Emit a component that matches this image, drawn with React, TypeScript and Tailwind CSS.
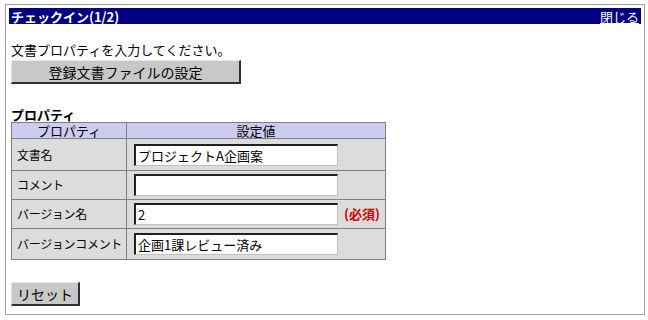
import React from "react";

const rows = [
	{ label: "文書名", value: "プロジェクトA企画案", required: false },
	{ label: "コメント", value: "", required: false },
	{ label: "バージョン名", value: "2", required: true },
	{ label: "バージョンコメント", value: "企画1課レビュー済み", required: false },
];

const App = () => {
	return (
		<div className="w-[648px] h-[320px] bg-white pt-[4px] pl-[5px] text-[13px] text-black" style={{ fontFamily: '"Noto Sans CJK JP", "Noto Sans", sans-serif' }}>
			<div className="w-[640px] h-[311px] border border-[#a0a0a0] p-[3px]">
				{/* title bar */}
				<div className="flex items-center justify-between h-[16px] bg-[#000080] text-white px-[2px] leading-none">
					<span className="text-[13px] font-bold">チェックイン(1/2)</span>
					<span className="text-[13px] underline">閉じる</span>
				</div>

				<div className="pl-[2px]">
					<p className="mt-[18px] leading-[15px]">文書プロパティを入力してください。</p>
					<button className="mt-[3px] w-[230px] h-[24px] bg-[#c8c8c8] border-t border-l border-t-[#e8e8e8] border-l-[#e8e8e8] border-r-2 border-b-2 border-r-[#303030] border-b-[#303030] text-[14px] leading-none">
						登録文書ファイルの設定
					</button>

					<h3 className="mt-[24px] font-bold leading-[14px]">プロパティ</h3>
					<table className="table-fixed w-[375px] border-collapse border border-[#808080] bg-[#dcdcdc]">
						<thead>
							<tr className="bg-[#ccccee]">
								<th className="w-[115px] h-[16px] border border-[#808080] font-normal leading-none p-0">プロパティ</th>
								<th className="border border-[#808080] font-normal leading-none p-0">設定値</th>
							</tr>
						</thead>
						<tbody>
							{rows.map((row, i) => (
								<tr key={i} className={i === 0 ? "h-[32px]" : i === 3 ? "h-[31px]" : "h-[29px]"}>
									<td className="border border-[#808080] pl-[5px] pr-0 leading-none whitespace-nowrap text-[12px] tracking-[-0.3px]">{row.label}</td>
									<td className="border border-[#808080] pl-[7px]">
										<div className="flex items-center gap-[6px]">
											<div className="w-[204px] h-[22px] bg-white border-t-2 border-l-2 border-t-[#202020] border-l-[#202020] border-b border-r border-b-[#c0c0c0] border-r-[#c0c0c0] flex items-center pl-[2px] leading-none">
												{row.value}
											</div>
											{row.required && <span className="text-[#cc0000] font-bold whitespace-nowrap">(必須)</span>}
										</div>
									</td>
								</tr>
							))}
						</tbody>
					</table>

					<button className="mt-[22px] w-[69px] h-[24px] bg-[#c8c8c8] border-t border-l border-t-[#e8e8e8] border-l-[#e8e8e8] border-r-2 border-b-2 border-r-[#303030] border-b-[#303030] text-[14px] leading-none">
						リセット
					</button>
				</div>
			</div>
		</div>
	);
};

export default App;
